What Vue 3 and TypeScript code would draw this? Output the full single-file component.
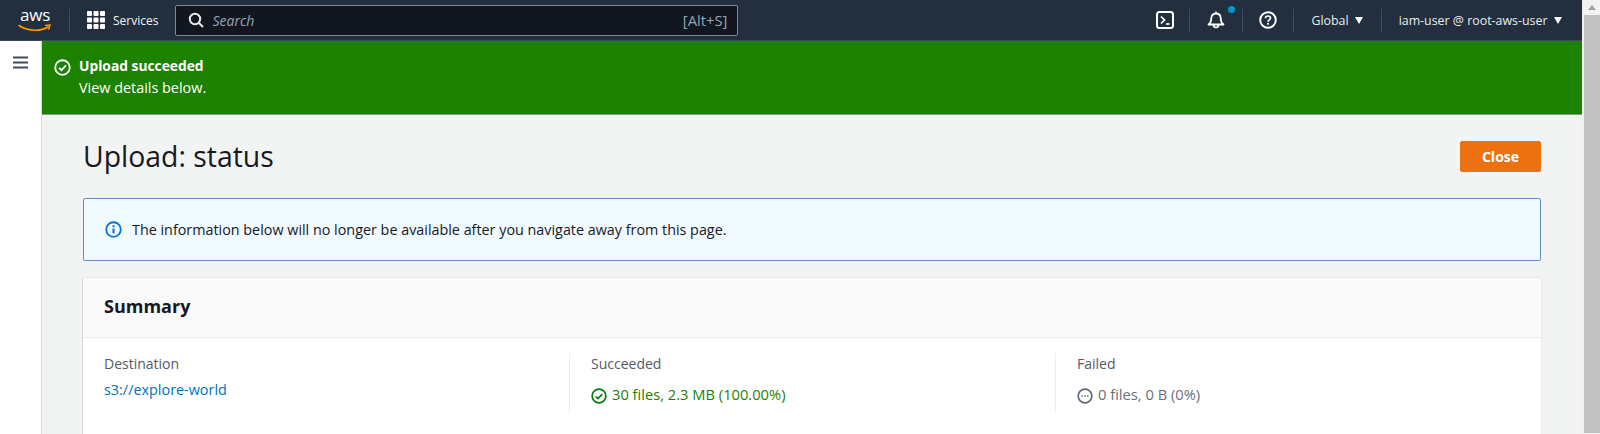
<script setup lang="ts">
interface Col { label: string }
const grid: number[] = [0, 1, 2, 3, 4, 5, 6, 7, 8]
const cols: Col[] = [{ label: 'Succeeded' }, { label: 'Failed' }]
</script>

<template>
  <div class="page">
    <div class="main">
      <header class="top">
        <div class="logo">
          <span class="aws">aws</span>
          <svg class="smile" viewBox="0 0 34 9" width="34" height="9">
            <path d="M1 1.5C9 7 22 8 30 3" fill="none" stroke="#f90" stroke-width="1.6" stroke-linecap="round" />
            <path d="M27 1.4l5-.4-1.4 4.6" fill="none" stroke="#f90" stroke-width="1.4" />
          </svg>
        </div>
        <span class="sep sep-logo"></span>
        <svg class="grid" viewBox="0 0 18 18" width="18" height="18">
          <template v-for="g in grid" :key="g">
            <rect :x="(g % 3) * 6.5" :y="Math.floor(g / 3) * 6.5" width="5" height="5" rx="0.8" fill="#fff" />
          </template>
        </svg>
        <span class="services">Services</span>
        <div class="search">
          <svg viewBox="0 0 16 16" width="16" height="16" class="mag">
            <circle cx="7" cy="7" r="5.2" fill="none" stroke="#e9ebed" stroke-width="2" />
            <path d="M11 11l4 4" stroke="#e9ebed" stroke-width="2" />
          </svg>
          <span class="placeholder">Search</span>
          <span class="hint">[Alt+S]</span>
        </div>
        <div class="tools">
          <svg viewBox="0 0 18 18" width="18" height="18" class="i-term">
            <rect x="1" y="1" width="16" height="16" rx="2.5" fill="none" stroke="#fff" stroke-width="2" />
            <path d="M5 5.5L8.5 9 5 12.5" fill="none" stroke="#fff" stroke-width="1.7" />
            <path d="M10 13h3.5" stroke="#fff" stroke-width="1.7" />
          </svg>
          <span class="sep sep-a"></span>
          <div class="bell">
            <svg viewBox="0 0 18 18" width="18" height="18">
              <path d="M1.5 13.5c2-1.500 2.700-3 2.700-5.500C4.200 4.500 6 2.500 9 2.500s4.800 2 4.800 5.500c0 2.500.7 4 2.700 5.500z" fill="none" stroke="#fff" stroke-width="1.800" stroke-linejoin="round" />
              <path d="M9 .5V2.500" stroke="#fff" stroke-width="1.600" />
              <path d="M6.500 14a2.500 2.500 0 0 0 5 0" fill="none" stroke="#fff" stroke-width="1.600" />
            </svg>
            <span class="dot"></span>
          </div>
          <span class="sep sep-b"></span>
          <svg viewBox="0 0 18 18" width="18" height="18" class="i-help">
            <circle cx="9" cy="9" r="7.800" fill="none" stroke="#fff" stroke-width="1.900" />
            <path d="M6.500 7.200C6.500 5.800 7.600 5 9 5s2.500.9 2.500 2.100c0 1.700-2.500 1.800-2.500 3.700" fill="none" stroke="#fff" stroke-width="1.700" />
            <rect x="8.100" y="11.900" width="1.800" height="1.800" fill="#fff" />
          </svg>
          <span class="sep sep-c"></span>
          <span class="menu m-global">Global</span>
          <span class="caret caret-g"></span>
          <span class="sep sep-d"></span>
          <span class="menu">iam-user @ root-aws-user</span>
          <span class="caret"></span>
        </div>
      </header>
      <div class="body">
        <aside class="side">
          <svg viewBox="0 0 16 14" width="16" height="14">
            <path d="M0 1.500h15M0 6.500h15M0 11.500h15" stroke="#414d5c" stroke-width="2" />
          </svg>
        </aside>
        <div class="content">
          <div class="flash">
            <svg viewBox="0 0 18 18" width="17" height="17" class="flash-ic">
              <circle cx="9" cy="9" r="7.700" fill="none" stroke="#fff" stroke-width="1.900" />
              <path d="M5.300 9.300l2.600 2.500 4.800-5" fill="none" stroke="#fff" stroke-width="1.900" />
            </svg>
            <div>
              <div class="flash-title">Upload succeeded</div>
              <div class="flash-sub">View details below.</div>
            </div>
          </div>
          <div class="inner">
            <div class="head">
              <h1>Upload: status</h1>
              <button class="close" type="button">Close</button>
            </div>
            <div class="info">
              <svg viewBox="0 0 18 18" width="17" height="17">
                <circle cx="9" cy="9" r="7.700" fill="none" stroke="#0972d3" stroke-width="1.900" />
                <path d="M9 8v5" stroke="#0972d3" stroke-width="2.200" />
                <rect x="7.900" y="4.600" width="2.200" height="2" fill="#0972d3" />
              </svg>
              <span>The information below will no longer be available after you navigate away from this page.</span>
            </div>
            <section class="card">
              <div class="card-head"><h2>Summary</h2></div>
              <div class="cols">
                <div class="col">
                  <div class="label">Destination</div>
                  <a class="link">s3://explore-world</a>
                </div>
                <div class="col divided">
                  <div class="label">{{ cols[0].label }}</div>
                  <div class="value ok">
                    <svg viewBox="0 0 18 18" width="16" height="16">
                      <circle cx="9" cy="9" r="7.700" fill="none" stroke="#037f0c" stroke-width="1.900" />
                      <path d="M5.300 9.300l2.600 2.500 4.800-5" fill="none" stroke="#037f0c" stroke-width="1.900" />
                    </svg>
                    <span>30 files, 2.3 MB (100.00%)</span>
                  </div>
                </div>
                <div class="col divided">
                  <div class="label">{{ cols[1].label }}</div>
                  <div class="value muted">
                    <svg viewBox="0 0 18 18" width="16" height="16">
                      <circle cx="9" cy="9" r="7.700" fill="none" stroke="#5f6b7a" stroke-width="1.900" />
                      <path d="M5 9h1.700M8.150 9h1.700M11.300 9H13" stroke="#5f6b7a" stroke-width="1.900" />
                    </svg>
                    <span>0 files, 0 B (0%)</span>
                  </div>
                </div>
              </div>
            </section>
          </div>
        </div>
      </div>
    </div>
    <div class="scrollbar">
      <div class="arrow"></div>
      <div class="thumb"></div>
    </div>
  </div>
</template>

<style>
html, body { margin: 0; overflow: hidden; }
</style>

<style scoped>
.page {
  display: flex;
  width: 1600px;
  height: 434px;
  overflow: hidden;
  font-family: "Open Sans", "Noto Sans", sans-serif;
  font-size: 14px;
  color: #16191f;
  background: #fff;
}
.main { width: 1582px; display: flex; flex-direction: column; flex: none; }
.scrollbar { flex: 1; background: #f1f1f1; padding-left: 2px; }
.arrow {
  width: 0; height: 0; margin: 5px auto 5px;
  border-left: 4px solid transparent; border-right: 4px solid transparent;
  border-bottom: 5px solid #a3a3a3;
}
.thumb { height: 418px; background: #c1c1c1; }
.top {
  height: 40px;
  flex: none;
  display: flex;
  align-items: center;
  background: #232f3e;
  border-bottom: 1px solid #3d4a5a;
  box-sizing: content-box;
  color: #fff;
}
.logo { width: 34px; margin-left: 18px; display: flex; flex-direction: column; align-items: center; height: 30px; position: relative; }
.aws { font-size: 17px; line-height: 20px; height: 19px; margin-top: 0; letter-spacing: -0.2px; }
.smile { margin-top: 0; }
.sep { width: 1px; height: 23px; background: #414d5c; flex: none; }
.sep-logo { margin-left: 17px; margin-right: 17px; }
.grid { flex: none; }
.services { font-size: 12px; margin-left: 8px; font-weight: 500; color: #f2f3f3; }
.search {
  margin-left: 17px;
  width: 563px;
  height: 31px;
  box-sizing: border-box;
  flex: none;
  display: flex;
  align-items: center;
  background: #12161f;
  border: 1px solid #7d8998;
  border-radius: 2px;
  padding: 0 10px 0 12px;
}
.mag { flex: none; }
.placeholder { margin-left: 8px; font-style: italic; font-size: 14px; color: #95a5b5; }
.hint { margin-left: auto; font-size: 14.8px; color: #95a5b5; }
.tools { display: flex; align-items: center; margin-left: 0; flex: 1; }
.i-term { margin-left: 418px; flex: none; }
.sep-a { margin-left: 15px; margin-right: 17px; }
.bell { position: relative; width: 18px; height: 18px; flex: none; }
.bell svg { display: block; }
.dot { position: absolute; top: -5px; right: -10px; width: 7px; height: 7px; border-radius: 50%; background: #0099cc; }
.sep-b { margin-left: 17px; margin-right: 16px; }
.i-help { flex: none; }
.sep-c { margin-left: 16px; margin-right: 17px; }
.menu { font-size: 12.4px; font-weight: 500; color: #eaeded; white-space: nowrap; }
.caret {
  width: 0; height: 0; margin-left: 7px;
  border-left: 4.500px solid transparent; border-right: 4.500px solid transparent;
  border-top: 7px solid #fff;
}
.caret-g { margin-left: 6px; }
.sep-d { margin-left: 18px; margin-right: 17px; }
.body { flex: 1; display: flex; min-height: 0; }
.side {
  width: 42px;
  flex: none;
  box-sizing: border-box;
  border-right: 1px solid #d5dbdb;
  background: #fff;
  padding: 14px 0 0 13px;
  box-shadow: 0 0 2px rgba(0,0,0,.1);
}
.content { flex: 1; background: #f2f3f3; min-width: 0; }
.flash {
  height: 74px;
  box-sizing: border-box;
  background: #1d8102;
  color: #fff;
  display: flex;
  padding: 14px 0 0 12px;
  gap: 8px;
  border-bottom: 1px solid #8a9a86;
}
.flash-ic { margin-top: 4px; flex: none; }
.flash-title { font-weight: 700; font-size: 13.8px; line-height: 22px; }
.flash-sub { font-size: 14.4px; line-height: 22px; }
.inner { padding: 0 41px 0 41px; }
.head { display: flex; align-items: flex-start; justify-content: space-between; height: 83px; padding-top: 26px; box-sizing: border-box; }
h1 { margin: 0; font-size: 28.4px; font-weight: 400; line-height: 30px; color: #16191f; }
.close {
  width: 81px;
  height: 31px;
  border: 1px solid #ec7211;
  border-radius: 2px;
  background: #ec7211;
  color: #fff;
  font: 700 14px "Open Sans", "Noto Sans", sans-serif;
}
.info {
  height: 63px;
  box-sizing: border-box;
  display: flex;
  align-items: center;
  gap: 10px;
  padding: 0 0 0 21px;
  background: #f1faff;
  border: 1px solid #5a90c8;
  border-radius: 2px;
  font-size: 14.35px;
}
.card {
  margin-top: 17px;
  height: 200px;
  background: #fff;
  box-shadow: -1px 0 0 #d5dbdb, 0 -1px 1px rgba(0,28,36,.04), 1px 0 0 #eaeded;
}
.card-head {
  height: 60px;
  box-sizing: border-box;
  background: #fafafa;
  border-bottom: 1px solid #eaeded;
  padding: 16px 21px 0;
}
h2 { margin: 0; font-size: 18px; line-height: 24px; font-weight: 700; color: #16191f; }
.cols { display: grid; grid-template-columns: repeat(3, 1fr); padding-top: 15px; }
.col { height: 59px; padding-left: 21px; box-sizing: border-box; }
.divided { border-left: 1px solid #eaeded; }
.label { font-size: 14px; line-height: 20px; color: #545b64; margin-top: 1px; }
.link { display: block; font-size: 14.4px; line-height: 20px; margin-top: 6px; color: #0073bb; }
.value { display: flex; align-items: center; gap: 5px; font-size: 14.7px; line-height: 20px; margin-top: 10px; }
.value svg { margin-top: 3px; flex: none; }
.ok { color: #1d8102; }
.muted { color: #687078; }
</style>
